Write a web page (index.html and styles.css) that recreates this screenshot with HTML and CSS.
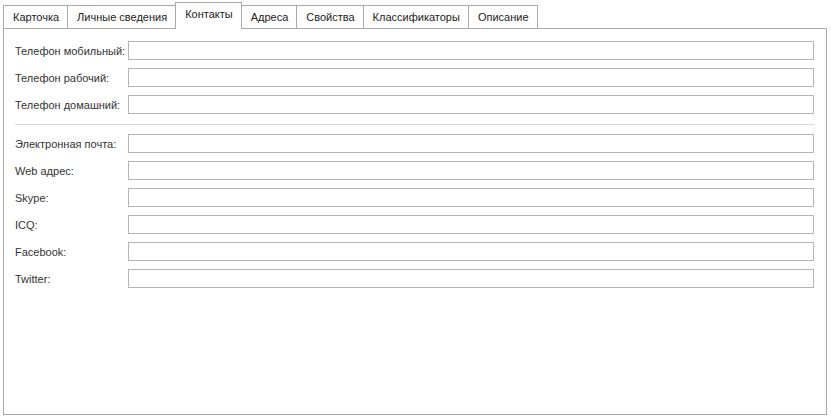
FILE: index.html
```html
<!DOCTYPE html>
<html lang="ru">
<head>
  <meta charset="UTF-8">
  <title>Контакты</title>
  <link rel="stylesheet" href="styles.css">
</head>
<body>
  <div class="tabs">
    <div class="tab">Карточка</div>
    <div class="tab">Личные сведения</div>
    <div class="tab active">Контакты</div>
    <div class="tab">Адреса</div>
    <div class="tab">Свойства</div>
    <div class="tab">Классификаторы</div>
    <div class="tab">Описание</div>
  </div>

  <div class="panel">
    <div class="group">
      <div class="row"><label>Телефон мобильный:</label><input type="text"></div>
      <div class="row"><label>Телефон рабочий:</label><input type="text"></div>
      <div class="row"><label>Телефон домашний:</label><input type="text"></div>
    </div>

    <div class="separator"></div>

    <div class="group">
      <div class="row"><label>Электронная почта:</label><input type="text"></div>
      <div class="row"><label>Web адрес:</label><input type="text"></div>
      <div class="row"><label>Skype:</label><input type="text"></div>
      <div class="row"><label>ICQ:</label><input type="text"></div>
      <div class="row"><label>Facebook:</label><input type="text"></div>
      <div class="row"><label>Twitter:</label><input type="text"></div>
    </div>
  </div>
</body>
</html>
```

FILE: styles.css
```css
body {
  margin: 0;
  padding: 2px 4px 0 3px;
  font-family: 'Liberation Sans', Arial, sans-serif;
  font-size: 11px;
  color: #1e1e1e;
  background: #fff;
}

.tabs {
  display: flex;
  align-items: flex-end;
  height: 26px;
}

.tab {
  flex-shrink: 0;
  height: 22px;
  line-height: 23px;
  padding: 0 8px 0 9px;
  border: 1px solid #a9a9a9;
  border-bottom: none;
  margin-left: -1px;
  background: #fff;
  color: #222;
  white-space: nowrap;
}

.tab:first-child {
  margin-left: 0;
}

/* selected tab sits over the panel's top border */
.tab.active {
  height: 26px;
  line-height: 22px;
  margin-bottom: -1px;
  position: relative;
  z-index: 1;
}

.panel {
  box-sizing: border-box;
  height: 387px;
  border: 1px solid #a9a9a9;
  padding: 12px 12px 0 11px;
}

.group {
  display: flex;
  flex-direction: column;
  gap: 8px;
}

.row {
  display: flex;
  align-items: center;
}

label {
  width: 113px;
  flex-shrink: 0;
  color: #333;
  white-space: nowrap;
}

input[type="text"] {
  flex: 1;
  height: 19px;
  box-sizing: border-box;
  margin: 0;
  border: 1px solid #b5b5b5;
  padding: 0 3px;
  font: inherit;
  background: #fff;
  outline: none;
}

.separator {
  height: 1px;
  background: #d7d7d7;
  margin: 10px 0 9px;
}
```
